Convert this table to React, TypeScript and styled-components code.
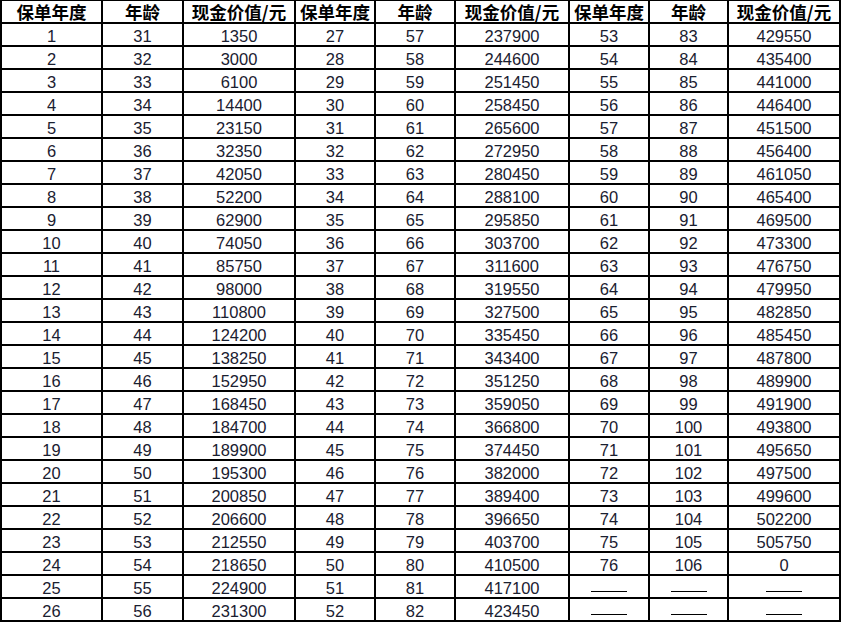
import React from 'react';
import styled, { createGlobalStyle } from 'styled-components';

const GlobalStyle = createGlobalStyle`
  html, body {
    margin: 0;
    padding: 0;
    background: #fff;
  }
`;

const Sheet = styled.div`
  display: grid;
  grid-template-columns: 99px 79px 110px 78px 78px 112px 78px 77px 110px;
  grid-auto-rows: 21px;
  gap: 2px;
  padding: 1px 2px 2px 2px;
  width: 841px;
  box-sizing: border-box;
  background: #000;
`;

const Cell = styled.div<{ $head?: boolean }>`
  background: #fff;
  display: flex;
  align-items: center;
  justify-content: center;
  padding-top: ${(p) => (p.$head ? '0' : '3px')};
  box-sizing: border-box;
  white-space: nowrap;
  color: ${(p) => (p.$head ? '#000' : '#1a2030')};
  font-family: ${(p) =>
    p.$head
      ? '"Noto Sans CJK SC", "Liberation Sans", sans-serif'
      : '"Liberation Sans", Arial, sans-serif'};
  font-size: ${(p) => (p.$head ? '17.5px' : '16.5px')};
  font-weight: ${(p) => (p.$head ? 700 : 400)};
  line-height: 1;
`;

const Dash = styled.span`
  display: block;
  width: 36px;
  height: 1px;
  background: #000;
  margin-top: 6px;
`;

const headers = ['保单年度', '年龄', '现金价值/元'];

const v1 = [1350, 3000, 6100, 14400, 23150, 32350, 42050, 52200, 62900, 74050, 85750, 98000, 110800, 124200, 138250, 152950, 168450, 184700, 189900, 195300, 200850, 206600, 212550, 218650, 224900, 231300];
const v2 = [237900, 244600, 251450, 258450, 265600, 272950, 280450, 288100, 295850, 303700, 311600, 319550, 327500, 335450, 343400, 351250, 359050, 366800, 374450, 382000, 389400, 396650, 403700, 410500, 417100, 423450];
const v3 = [429550, 435400, 441000, 446400, 451500, 456400, 461050, 465400, 469500, 473300, 476750, 479950, 482850, 485450, 487800, 489900, 491900, 493800, 495650, 497500, 499600, 502200, 505750, 0];

const App = () => {
  const cells: React.ReactNode[] = [];

  for (let g = 0; g < 3; g++) {
    headers.forEach((h, i) => {
      cells.push(<Cell key={`h-${g}-${i}`} $head>{h}</Cell>);
    });
  }

  for (let r = 0; r < 26; r++) {
    const groups = [
      [r + 1, r + 31, v1[r]],
      [r + 27, r + 57, v2[r]],
      r < v3.length ? [r + 53, r + 83, v3[r]] : null,
    ];
    groups.forEach((grp, g) => {
      for (let c = 0; c < 3; c++) {
        cells.push(
          <Cell key={`${r}-${g}-${c}`}>
            {grp ? grp[c] : <Dash />}
          </Cell>
        );
      }
    });
  }

  return (
    <>
      <GlobalStyle />
      <Sheet>{cells}</Sheet>
    </>
  );
};

export default App;
